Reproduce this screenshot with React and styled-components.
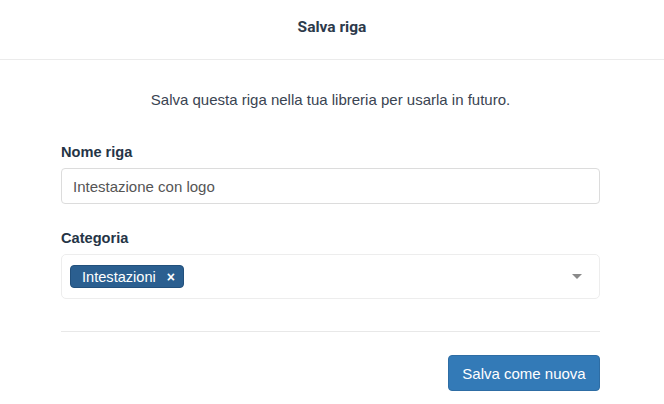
import React from "react";
import styled, { createGlobalStyle } from "styled-components";

const GlobalStyle = createGlobalStyle`
  html, body {
    margin: 0;
    padding: 0;
    background: #ffffff;
  }
  body {
    font-family: "Liberation Sans", Arial, sans-serif;
    color: #333333;
  }
`;

const Modal = styled.div`
  width: 664px;
  height: 404px;
  background: #ffffff;
  display: flex;
  flex-direction: column;
`;

const Header = styled.div`
  height: 60px;
  display: flex;
  align-items: center;
  justify-content: center;
  padding-bottom: 5px;
  border-bottom: 1px solid #ebebeb;
  box-sizing: border-box;
`;

const Title = styled.h4`
  margin: 0;
  font-family: Roboto, "Liberation Sans", sans-serif;
  font-weight: 700;
  font-size: 15.5px;
  color: #2c3a4b;
`;

const Body = styled.div`
  padding: 0 64px 0 61px;
  display: flex;
  flex-direction: column;
`;

const Intro = styled.p`
  margin: 31px 0 0;
  text-align: center;
  font-size: 15px;
  line-height: 18px;
  color: #3a4452;
`;

const Field = styled.div`
  display: flex;
  flex-direction: column;
  margin-top: ${(p) => p.$top}px;
`;

const Label = styled.label`
  font-weight: 700;
  font-size: 14.6px;
  line-height: 18px;
  color: #253446;
  margin-bottom: 7px;
`;

const TextInput = styled.input`
  height: 36px;
  box-sizing: border-box;
  border: 1px solid #dcdcdc;
  border-radius: 4px;
  padding: 0 11px;
  font-family: "Liberation Sans", Arial, sans-serif;
  font-size: 15px;
  color: #555555;
  outline: none;
`;

const Select = styled.div`
  height: 45px;
  box-sizing: border-box;
  border: 1px solid #ededed;
  border-radius: 5px;
  display: flex;
  align-items: center;
  justify-content: space-between;
  padding: 0 17px 0 8px;
`;

const Tag = styled.span`
  display: inline-flex;
  align-items: center;
  gap: 11px;
  height: 23px;
  box-sizing: border-box;
  padding: 0 8px 0 11px;
  background: #2b5f90;
  border: 1px solid #22507c;
  border-radius: 4px;
  color: #ffffff;
  font-size: 14.6px;
`;

const Remove = styled.span`
  font-weight: 700;
  font-size: 14px;
  line-height: 1;
`;

const Caret = styled.span`
  width: 0;
  height: 0;
  border-left: 5px solid transparent;
  border-right: 5px solid transparent;
  border-top: 5px solid #8a8a8a;
`;

const Divider = styled.hr`
  margin: 32px 0 0;
  border: 0;
  border-top: 1px solid #e8e8e8;
`;

const Footer = styled.div`
  display: flex;
  justify-content: flex-end;
  margin-top: 23px;
`;

const Button = styled.button`
  height: 36px;
  width: 152px;
  padding: 0;
  background: #337ab7;
  border: 1px solid #2e6da4;
  border-radius: 4px;
  color: #ffffff;
  font-family: "Liberation Sans", Arial, sans-serif;
  font-size: 15px;
`;

export default function App() {
  return (
    <>
      <GlobalStyle />
      <Modal>
        <Header>
          <Title>Salva riga</Title>
        </Header>
        <Body>
          <Intro>Salva questa riga nella tua libreria per usarla in futuro.</Intro>
          <Field $top={34}>
            <Label>Nome riga</Label>
            <TextInput defaultValue="Intestazione con logo" />
          </Field>
          <Field $top={25}>
            <Label>Categoria</Label>
            <Select>
              <Tag>
                Intestazioni <Remove>×</Remove>
              </Tag>
              <Caret />
            </Select>
          </Field>
          <Divider />
          <Footer>
            <Button>Salva come nuova</Button>
          </Footer>
        </Body>
      </Modal>
    </>
  );
}
